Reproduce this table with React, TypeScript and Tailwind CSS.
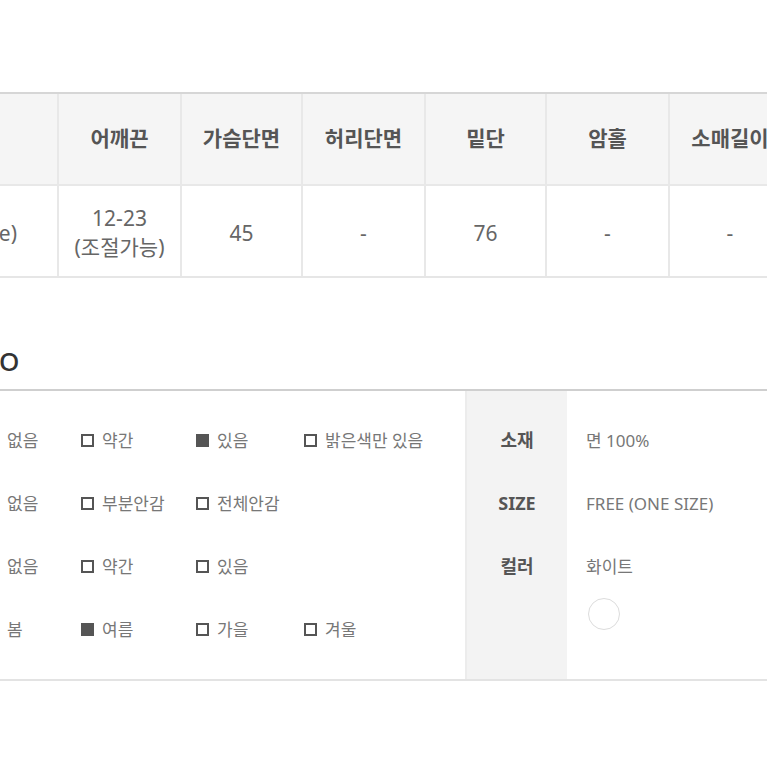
const font = { fontFamily: '"Noto Sans", "Noto Sans CJK KR", sans-serif' };

const headers = ["", "어깨끈", "가슴단면", "허리단면", "밑단", "암홀", "소매길이"];
const values: string[][] = [["Free (One size)"], ["12-23", "(조절가능)"], ["45"], ["-"], ["76"], ["-"], ["-"]];
const cols = "grid-cols-[200px_123px_121px_123px_121px_123px_122px]";

type Opt = { label: string; on?: boolean };
const options: Opt[][] = [
  [{ label: "없음" }, { label: "약간" }, { label: "있음", on: true }, { label: "밝은색만 있음" }],
  [{ label: "없음" }, { label: "부분안감" }, { label: "전체안감" }],
  [{ label: "없음" }, { label: "약간" }, { label: "있음" }],
  [{ label: "봄" }, { label: "여름", on: true }, { label: "가을" }, { label: "겨울" }],
];
const optWidths = ["w-[95px]", "w-[115px]", "w-[108px]", "w-[160px]"];

function Check({ on }: { on?: boolean }) {
  return (
    <span
      className={
        "inline-block h-[13px] w-[13px] shrink-0 border-2 border-[#555] " +
        (on ? "bg-[#555]" : "bg-white")
      }
    />
  );
}

export default function App() {
  return (
    <div className="relative h-[767px] w-[767px] overflow-hidden bg-white" style={font}>
      {/* size table */}
      <div className={"mt-[92px] ml-[-143px] grid w-[933px] border-t-2 border-b-2 border-t-[#d6d6d6] border-b-[#e6e6e6] " + cols}>
        {headers.map((h, i) => (
          <div
            key={"h" + i}
            className={
              "flex h-[92px] items-center justify-center border-b-2 border-[#e8e8e8] bg-[#f5f5f5] text-[21px] font-semibold text-[#555] " +
              (i > 0 ? "border-l-2" : "")
            }
          >
            {h}
          </div>
        ))}
        {values.map((v, i) => (
          <div
            key={"v" + i}
            className={
              "flex h-[90px] flex-col justify-center bg-white pt-[4px] text-[21px] leading-[29px] text-[#666] " +
              (i > 0 ? "items-center border-l-2 border-[#e8e8e8]" : "items-end pr-[40px]")
            }
          >
            {v.map((t) => (
              <span key={t}>{t}</span>
            ))}
          </div>
        ))}
      </div>

      {/* info title */}
      <div className="mt-[67px] ml-[-44px] pb-[12px] text-[26px] leading-[32px] font-medium text-[#333]">INFO</div>

      <div className="flex h-[292px] border-t-2 border-b-2 border-t-[#cfcfcf] border-b-[#e3e3e3]">
        <div className="ml-[-14px] w-[481px] shrink-0 border-r-2 border-[#ececec] pt-[18px]">
          {options.map((row, r) => (
            <div key={r} className="flex h-[63px] items-center">
              {row.map((o, c) => (
                <div key={c} className={"flex shrink-0 items-center gap-[8px] " + optWidths[c]}>
                  <Check on={o.on} />
                  <span className="text-[17px] text-[#777]">{o.label}</span>
                </div>
              ))}
            </div>
          ))}
        </div>
        <div className="w-[100px] shrink-0 bg-[#f3f3f3] pt-[18px]">
          {["소재", "SIZE", "컬러"].map((l) => (
            <div key={l} className="flex h-[63px] items-center justify-center text-[18px] font-bold text-[#555]">
              {l}
            </div>
          ))}
        </div>
        <div className="flex-1 pt-[18px] pl-[19px]">
          {["면 100%", "FREE (ONE SIZE)", "화이트"].map((l) => (
            <div key={l} className="flex h-[63px] items-center text-[17px] text-[#777]">
              {l}
            </div>
          ))}
          <div className="ml-[2px] mt-[0px] h-[32px] w-[32px] rounded-full border border-[#dcdcdc] bg-white" />
        </div>
      </div>
    </div>
  );
}
